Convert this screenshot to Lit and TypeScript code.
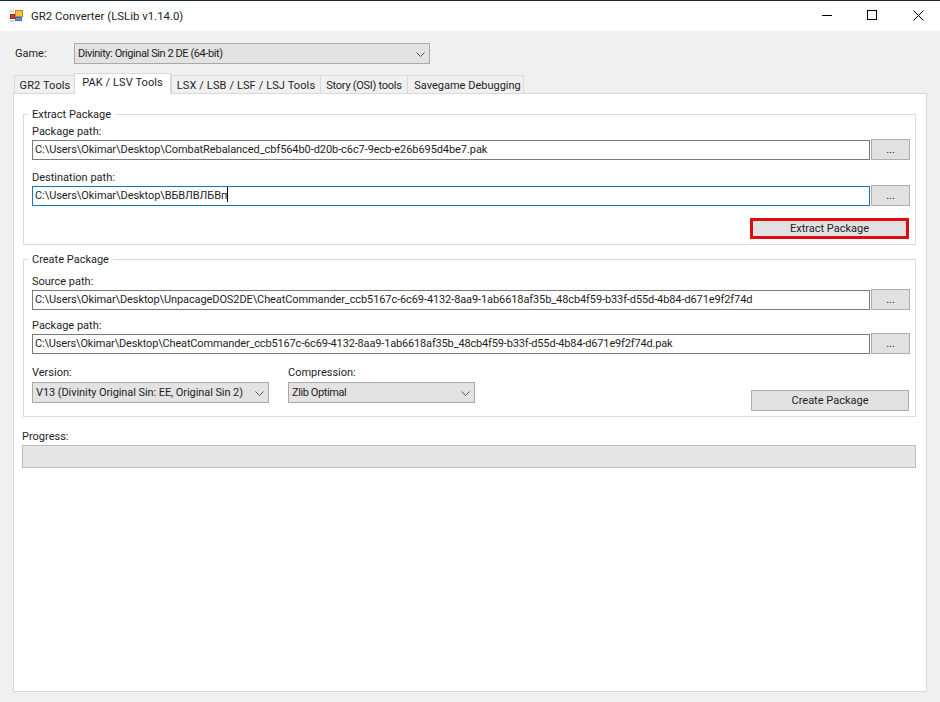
import { LitElement, html, css, svg } from "lit";
import { customElement } from "lit/decorators.js";

const chevron = svg`<svg class="chev" width="9" height="5" viewBox="0 0 9 5"><path d="M.5.5 4.5 4.5 8.5.5" fill="none" stroke="#555" stroke-width="1"/></svg>`;

@customElement("app-root")
export class AppRoot extends LitElement {
  static styles = css`
    :host { display: block; width: 940px; height: 702px; overflow: hidden; background: #f0f0f0; font: 11px/16px Roboto, sans-serif; color: #1e1e1e; }
    * { box-sizing: border-box; }
    .window { display: flex; flex-direction: column; height: 702px; }
    .titlebar { height: 31px; background: #fff; border-top: 1px solid #1c2b3a; display: flex; align-items: center; padding-left: 9px; flex: none; }
    .appicon { display: block; margin-right: 7px; }
    .title { flex: 1; font-size: 11.4px; }
    .wc { width: 45px; height: 30px; display: flex; align-items: center; justify-content: center; }
    .wc svg { display: block; }
    .wc-close { padding-left: 4px; }
    .wc-group { display: flex; padding-right: 1px; margin-top: -2px; }
    .client { flex: 1; display: flex; flex-direction: column; padding: 12px 13px 10px; }
    .game { display: flex; align-items: center; height: 21px; flex: none; }
    .game label { width: 61px; padding-left: 2px; }
    .select { height: 21px; background: #e3e3e3; border: 1px solid #a9a9a9; display: flex; align-items: center; justify-content: space-between; padding: 1px 4px 0 3px; white-space: nowrap; }
    .sel-game { width: 356px; }
    .sel-game span { letter-spacing: -0.42px; }
    .sel-ver span { letter-spacing: -0.08px; }
    .sel-comp span { letter-spacing: -0.4px; }
    .tabs { display: flex; align-items: flex-end; height: 20px; margin-top: 9px; padding-left: 1px; flex: none; position: relative; z-index: 1; }
    .tab { height: 18px; background: #f0f0f0; border: 1px solid #d9d9d9; border-bottom: none; margin-right: -1px; text-align: center; line-height: 19px; white-space: nowrap; }
    .tab.active { background: #fff; line-height: 17px; margin: 0 0 -1px -1px; z-index: 1; height: 21px; letter-spacing: 0.1px; }
    .tab-gr2 { letter-spacing: 0.1px; }
    .tab-lsx { letter-spacing: 0.12px; }
    .tab-story { letter-spacing: -0.27px; }
    .tab-save { padding-left: 4px; }
    .panel { flex: 1; background: #fff; border: 1px solid #d9d9d9; padding: 20px 10px 0 9px; }
    fieldset { margin: 0; border: 1px solid #dcdcdc; padding: 0; position: relative; display: block; }
    legend { position: absolute; top: -7px; left: 4px; background: #fff; padding: 0 4px; line-height: 14px; }
    .g1 { height: 131px; padding: 8px 5px 0 8px; }
    .g2 { height: 158px; margin-top: 14px; padding: 13px 5px 0 8px; }
    .lbl { height: 16px; padding-top: 1px; }
    .row { display: flex; gap: 1px; height: 21px; }
    .field { flex: 1; min-width: 0; height: 20px; background: #fff; border: 1px solid #7a7a7a; padding: 0 2px 0 2px; line-height: 18px; white-space: nowrap; overflow: hidden; margin-top: 1px; }
    .field.focus { border-color: #0a78c4; }
    .t1 { letter-spacing: -0.07px; }
    .t2 { letter-spacing: -0.1px; }
    .t3 { letter-spacing: -0.16px; }
    .caret { display: inline-block; width: 1px; height: 15px; background: #000; vertical-align: -3px; }
    .btn { background: #e1e1e1; border: 1px solid #adadad; display: flex; align-items: center; justify-content: center; padding-top: 1px; }
    .browse { width: 39px; height: 21px; flex: none; }
    .spaced { margin-top: 9px; }
    .spaced2 { margin-top: 7px; }
    .act { display: flex; justify-content: flex-end; margin: 12px 1px 0 0; }
    .btn-ex { width: 159px; height: 21px; border: 3px solid #e00b12; }
    .opts { display: flex; margin-top: 10px; position: relative; height: 54px; }
    .opt { display: flex; flex-direction: column; }
    .opt .lbl { height: 18px; }
    .opt-v { width: 237px; margin-right: 19px; }
    .opt-c { width: 187px; }
    .btn-cr { position: absolute; right: 1px; top: 26px; width: 158px; height: 21px; }
    .progress-l { margin: 11px 0 0 -1px; height: 16px; padding-top: 1px; }
    .bar { height: 23px; margin: 1px 0 0 -1px; background: #e6e6e6; border: 1px solid #bcbcbc; }
    .chev { flex: none; }
  `;

  render() {
    return html`<div class="window">
      <div class="titlebar">
        <svg class="appicon" width="15" height="15" viewBox="0 0 15 15">
          <rect x="1" y="1" width="4" height="3" fill="#d9d9d9"/>
          <rect x="6.5" y="1.5" width="7" height="6" fill="#f5c33b" stroke="#b98a1c"/>
          <rect x="1.5" y="5.5" width="4" height="4" fill="#d8402c" stroke="#9a2a1c"/>
          <rect x="6.5" y="8.5" width="6" height="3" fill="#5b8fd8" stroke="#3f6fb5"/>
          <rect x="1" y="11" width="4" height="2" fill="#c9d4e4"/>
        </svg>
        <div class="title">GR2 Converter (LSLib v1.14.0)</div>
        <div class="wc-group">
          <div class="wc"><svg width="10" height="10" viewBox="0 0 10 10"><path d="M0 5.5H10" stroke="#000"/></svg></div>
          <div class="wc"><svg width="10" height="10" viewBox="0 0 10 10"><rect x=".5" y=".5" width="9" height="9" fill="none" stroke="#000"/></svg></div>
          <div class="wc wc-close"><svg width="11" height="11" viewBox="0 0 11 11"><path d="M.5.5 10.5 10.5M10.5.5.5 10.5" stroke="#000"/></svg></div>
        </div>
      </div>
      <div class="client">
        <div class="game"><label>Game:</label><div class="select sel-game"><span>Divinity: Original Sin 2 DE (64-bit)</span>${chevron}</div></div>
        <div class="tabs">
          <div class="tab tab-gr2" style="width:62px">GR2 Tools</div>
          <div class="tab active" style="width:97px">PAK / LSV Tools</div>
          <div class="tab tab-lsx" style="width:150px">LSX / LSB / LSF / LSJ Tools</div>
          <div class="tab tab-story" style="width:88px">Story (OSI) tools</div>
          <div class="tab tab-save" style="width:117px">Savegame Debugging</div>
        </div>
        <div class="panel">
          <fieldset class="g1">
            <legend>Extract Package</legend>
            <div class="lbl">Package path:</div>
            <div class="row"><div class="field t1">C:\\Users\\Okimar\\Desktop\\CombatRebalanced_cbf564b0-d20b-c6c7-9ecb-e26b695d4be7.pak</div><div class="btn browse">...</div></div>
            <div class="lbl spaced">Destination path:</div>
            <div class="row"><div class="field focus t1">C:\\Users\\Okimar\\Desktop\\ВБВЛВЛБВп<span class="caret"></span></div><div class="btn browse">...</div></div>
            <div class="act"><div class="btn btn-ex">Extract Package</div></div>
          </fieldset>
          <fieldset class="g2">
            <legend>Create Package</legend>
            <div class="lbl">Source path:</div>
            <div class="row"><div class="field t2">C:\\Users\\Okimar\\Desktop\\UnpacageDOS2DE\\CheatCommander_ccb5167c-6c69-4132-8aa9-1ab6618af35b_48cb4f59-b33f-d55d-4b84-d671e9f2f74d</div><div class="btn browse">...</div></div>
            <div class="lbl spaced2">Package path:</div>
            <div class="row"><div class="field t3">C:\\Users\\Okimar\\Desktop\\CheatCommander_ccb5167c-6c69-4132-8aa9-1ab6618af35b_48cb4f59-b33f-d55d-4b84-d671e9f2f74d.pak</div><div class="btn browse">...</div></div>
            <div class="opts">
              <div class="opt opt-v"><div class="lbl">Version:</div><div class="select sel-ver"><span>V13 (Divinity Original Sin: EE, Original Sin 2)</span>${chevron}</div></div>
              <div class="opt opt-c"><div class="lbl">Compression:</div><div class="select sel-comp"><span>Zlib Optimal</span>${chevron}</div></div>
              <div class="btn btn-cr">Create Package</div>
            </div>
          </fieldset>
          <div class="progress-l">Progress:</div>
          <div class="bar"></div>
        </div>
      </div>
    </div>`;
  }
}
